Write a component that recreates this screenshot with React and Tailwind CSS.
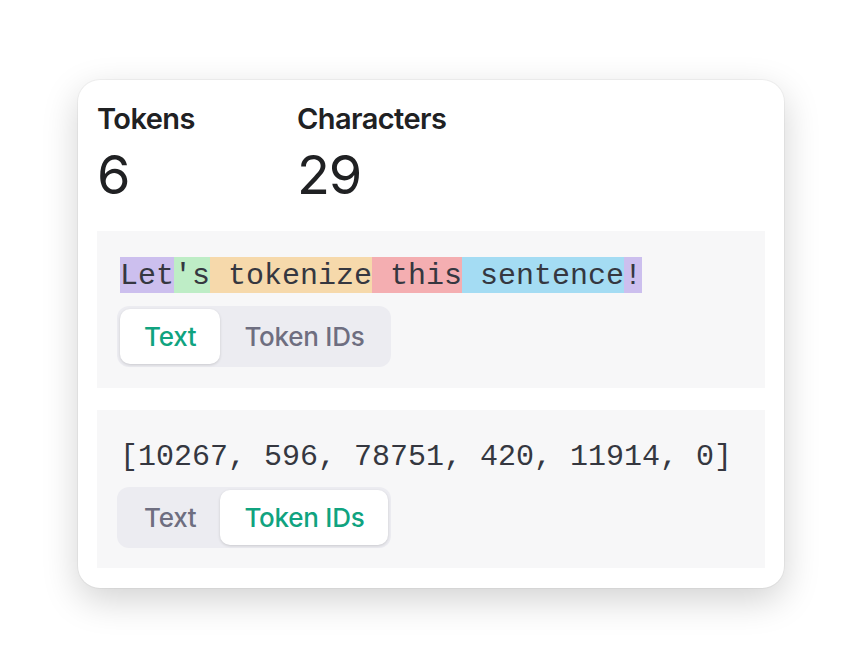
import React from "react";
import clsx from "clsx";

const tokens = [
  { text: "Let", color: "bg-[rgba(107,64,216,0.3)]" },
  { text: "'s", color: "bg-[rgba(104,222,122,0.4)]" },
  { text: " tokenize", color: "bg-[rgba(244,172,54,0.4)]" },
  { text: " this", color: "bg-[rgba(239,65,70,0.4)]" },
  { text: " sentence", color: "bg-[rgba(39,181,234,0.4)]" },
  { text: "!", color: "bg-[rgba(107,64,216,0.3)]" },
];

const ids = [10267, 596, 78751, 420, 11914, 0];

function Tabs({ active }) {
  return (
    <div className="-ml-[3px] inline-flex rounded-[12px] bg-[#ececf1] p-[3px]">
      {["Text", "Token IDs"].map((label) => (
        <div
          key={label}
          className={clsx(
            "flex h-[55px] items-center rounded-[10px] px-[24px] text-[26px] font-medium tracking-[-0.01em]",
            active === label
              ? "bg-white text-[#10a37f] shadow-[0_1px_3px_rgba(0,0,0,0.15)]"
              : "text-[#6e6e80]"
          )}
        >
          {label}
        </div>
      ))}
    </div>
  );
}

function Stat({ label, value, width }) {
  return (
    <div className={clsx("flex flex-col", width)}>
      <div className="text-[29px] font-semibold leading-[36px] tracking-[-0.02em] text-[#202123]">
        {label}
      </div>
      <div className="mt-[8px] text-[54px] leading-[60px] tracking-[-0.02em] text-[#202123]">
        {value}
      </div>
    </div>
  );
}

export default function App() {
  return (
    <div className="min-h-[668px] bg-white pl-[78px] pt-[80px] font-['Inter',sans-serif]">
      <div className="w-[706px] rounded-[22px] bg-white px-[19px] pb-[20px] pt-[21px] shadow-[0_12px_36px_rgba(0,0,0,0.18),0_0_0_1px_rgba(0,0,0,0.04)]">
        <div className="flex">
          <Stat label="Tokens" value="6" width="w-[200px]" />
          <Stat label="Characters" value="29" />
        </div>

        <div className="mt-[26px] flex flex-col gap-[22px]">
          <div className="flex flex-col items-start bg-[#f7f7f8] px-[23px] pb-[21px] pt-[26px]">
            <div className="flex font-['Liberation_Mono',monospace] text-[30px] text-[#353740] whitespace-pre">
              {tokens.map((t, i) => (
                <span key={i} className={clsx("h-[36px] pt-[1px] leading-[36px]", t.color)}>
                  {t.text}
                </span>
              ))}
            </div>
            <div className="mt-[13px]">
              <Tabs active="Text" />
            </div>
          </div>

          <div className="flex flex-col items-start bg-[#f7f7f8] px-[23px] pb-[20px] pt-[29px]">
            <div className="h-[36px] font-['Liberation_Mono',monospace] text-[30px] leading-[36px] text-[#353740] whitespace-pre">
              [{ids.join(", ")}]
            </div>
            <div className="mt-[12px]">
              <Tabs active="Token IDs" />
            </div>
          </div>
        </div>
      </div>
    </div>
  );
}
